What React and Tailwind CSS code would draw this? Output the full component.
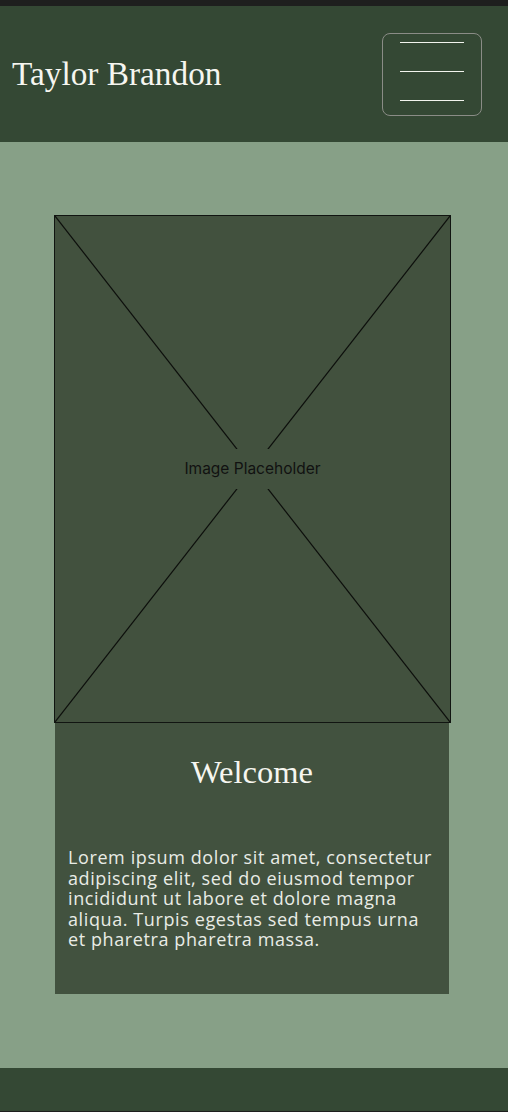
const serif = { fontFamily: '"Liberation Serif", "DejaVu Serif", serif' }

const MenuButton = () => (
  <button
    aria-label="Open menu"
    className="flex h-[83px] w-[100px] flex-col items-center gap-[27.5px] rounded-lg border border-[#8a8c86] pt-[8px]"
    type="button"
  >
    <span className="h-[1.5px] w-16 shrink-0 bg-[#f2f4ee]" />
    <span className="h-[1.5px] w-16 shrink-0 bg-[#f2f4ee]" />
    <span className="h-[1.5px] w-16 shrink-0 bg-[#f2f4ee]" />
  </button>
)

const ImagePlaceholder = () => (
  <div className="relative flex h-[508px] w-[397px] items-center justify-center border border-[#111511] bg-[#42513e]">
    <svg
      className="absolute inset-0 h-full w-full"
      preserveAspectRatio="none"
      viewBox="0 0 100 100"
    >
      <line x1="0" y1="0" x2="100" y2="100" stroke="#0d0f0c" strokeWidth="1.2" vectorEffect="non-scaling-stroke" />
      <line x1="100" y1="0" x2="0" y2="100" stroke="#0d0f0c" strokeWidth="1.2" vectorEffect="non-scaling-stroke" />
    </svg>
    <span
      className="relative bg-[#42513e] px-1 py-[11px] text-[15.5px] leading-[18px] text-[#111]"
      style={{ fontFamily: 'Inter, "Noto Sans", sans-serif' }}
    >
      Image Placeholder
    </span>
  </div>
)

const App = () => {
  return (
    <div className="flex min-h-[1112px] flex-col bg-[#87a087]">
      <div className="h-[6px] bg-[#1e1f1e]" />

      <header className="flex h-[136px] items-center justify-between bg-[#344834] pl-3 pr-[26px]">
        <h1 className="text-[33.3px] leading-none text-[#f6f6f0]" style={serif}>
          Taylor Brandon
        </h1>
        <MenuButton />
      </header>

      <main className="flex flex-1 flex-col items-start px-[54px] pt-[73px] pb-[74px]">
        <ImagePlaceholder />
        <section className="ml-px flex h-[271px] w-[394px] flex-col bg-[#42523f] px-[13px]">
          <h2 className="mt-[33px] text-center text-[32.5px] leading-[32px] text-[#f6f6f0]" style={serif}>
            Welcome
          </h2>
          <p
            className="mt-[59px] whitespace-nowrap text-[18px] leading-[20.5px] tracking-[0.6px] text-[#e9ece6]"
            style={{ fontFamily: '"Open Sans", "Liberation Sans", sans-serif' }}
          >
            Lorem ipsum dolor sit amet, consectetur
            <br />
            adipiscing elit, sed do eiusmod tempor
            <br />
            incididunt ut labore et dolore magna
            <br />
            aliqua. Turpis egestas sed tempus urna
            <br />
            et pharetra pharetra massa.
          </p>
        </section>
      </main>

      <footer className="h-[43px] bg-[#344834]" />
      <div className="h-[2px] bg-[#1e1f1e]" />
    </div>
  )
}

export default App
